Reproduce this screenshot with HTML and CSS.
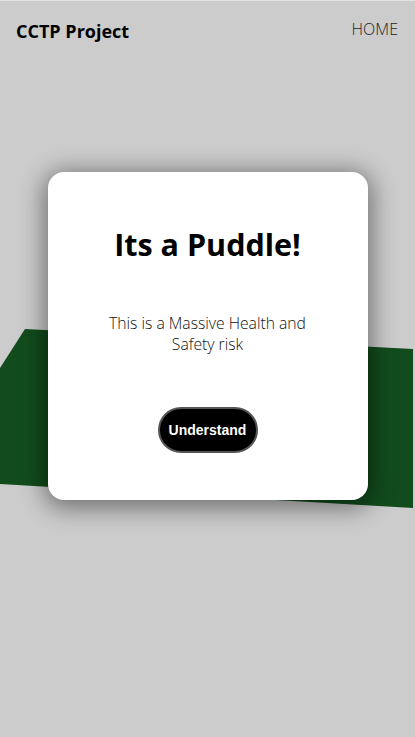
FILE: index.html
```html
<!DOCTYPE html>
<html>
<head>
<meta charset="utf-8">
<link rel="stylesheet" href="styles.css">
</head>
<body>
<div class="page">
  <header class="bar">
    <div class="brand">CCTP Project</div>
    <nav class="nav">HOME</nav>
  </header>
  <div class="puddle"></div>
  <main class="stage">
    <div class="card">
      <h1 class="title">Its a Puddle!</h1>
      <p class="msg">This is a Massive Health and<br>Safety risk</p>
      <button class="btn">Understand</button>
    </div>
  </main>
</div>
</body>
</html>
```
FILE: styles.css
```css
html, body { margin: 0; padding: 0; }
body {
  background: #cccccc;
  font-family: "Open Sans", "Noto Sans", sans-serif;
  color: #000;
}
.page {
  position: relative;
  width: 415px;
  height: 737px;
  overflow: hidden;
  border-top: 1px solid #e2e2e2;
  box-sizing: border-box;
}
.bar {
  display: flex;
  justify-content: space-between;
  align-items: flex-start;
  padding: 17px 17px 0 16px;
  height: 60px;
  box-sizing: border-box;
}
.brand {
  font-weight: 700;
  font-size: 18px;
  line-height: 24px;
  margin-top: 1px;
}
.nav {
  font-weight: 300;
  font-size: 16px;
  line-height: 22px;
  color: #222;
}
.puddle {
  position: absolute;
  left: 0;
  top: 0;
  width: 415px;
  height: 737px;
  background: #124c1c;
  clip-path: polygon(25px 328px, 413px 348px, 413px 507px, 0 483px, 0 367px);
}
.stage {
  position: relative;
  display: flex;
  justify-content: center;
  padding-top: 111px;
}
.card {
  width: 320px;
  height: 328px;
  background: #fff;
  border-radius: 16px;
  box-shadow: 0 4px 24px 4px rgba(0,0,0,0.45);
  display: flex;
  flex-direction: column;
  align-items: center;
  box-sizing: border-box;
  padding-top: 51px;
}
.title {
  margin: 0;
  font-size: 30.5px;
  font-weight: 700;
  line-height: 42px;
}
.msg {
  margin: 48px 0 0;
  font-size: 15.7px;
  font-weight: 300;
  line-height: 21px;
  text-align: center;
  color: #111;
}
.btn {
  margin-top: 52px;
  width: 100px;
  height: 46px;
  border-radius: 23px;
  background: #000;
  color: #fff;
  border: 2px solid #555;
  font-family: "Liberation Sans", Arial, sans-serif;
  font-weight: 700;
  font-size: 14px;
  padding: 0;
}
```
